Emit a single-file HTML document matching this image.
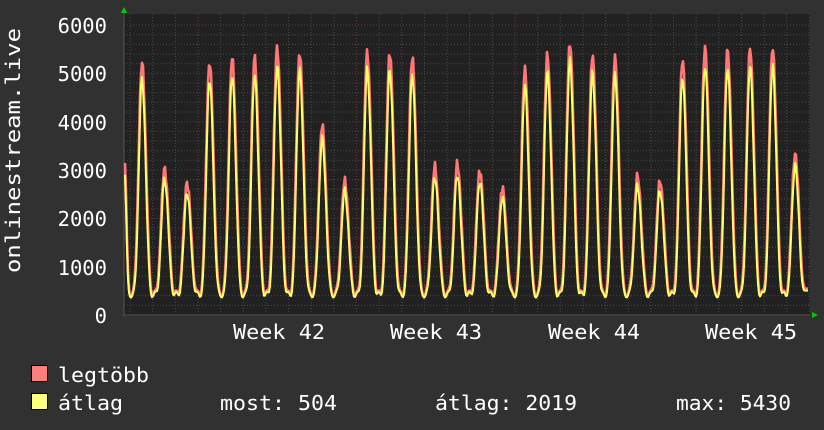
<!DOCTYPE html>
<html><head><meta charset="utf-8"><style>
html,body{margin:0;padding:0;background:#313131;}
svg{display:block}
text{font-family:"DejaVu Sans Mono","Liberation Mono",monospace;fill:#fff;font-size:20.5px}
</style></head><body>
<svg id="s" width="824" height="430" xmlns="http://www.w3.org/2000/svg">
<rect x="0" y="0" width="824" height="430" fill="#313131"/>
<rect x="124" y="14" width="686" height="302" fill="#212121"/>
<g id="grid"></g>
<path id="red" fill="none" stroke="#ff7777" stroke-width="2.6" stroke-linejoin="round"/>
<path id="yel" fill="none" stroke="#ffff66" stroke-width="2" stroke-linejoin="round"/>
<polygon points="121,13 127,13 124,7" fill="#00cc00"/>
<polygon points="812,312 812,318 818,315" fill="#00cc00"/>
<g text-anchor="end">
<text x="107" y="33">6000</text>
<text x="107" y="81">5000</text>
<text x="107" y="130">4000</text>
<text x="107" y="178">3000</text>
<text x="107" y="226">2000</text>
<text x="107" y="275">1000</text>
<text x="107" y="323">0</text>
</g>
<text transform="translate(20,273) rotate(-90)" textLength="245" lengthAdjust="spacingAndGlyphs">onlinestream.live</text>
<text x="233" y="339" textLength="92" lengthAdjust="spacingAndGlyphs">Week 42</text>
<text x="390" y="339" textLength="92" lengthAdjust="spacingAndGlyphs">Week 43</text>
<text x="548" y="339" textLength="92" lengthAdjust="spacingAndGlyphs">Week 44</text>
<text x="705" y="339" textLength="92" lengthAdjust="spacingAndGlyphs">Week 45</text>
<rect x="31.5" y="365.5" width="16" height="16" fill="#ff7f7f" stroke="#000"/>
<rect x="31.5" y="393.5" width="16" height="16" fill="#ffff7f" stroke="#000"/>
<text x="58" y="382" textLength="91" lengthAdjust="spacingAndGlyphs">legtöbb</text>
<text x="58" y="410" textLength="65" lengthAdjust="spacingAndGlyphs">átlag</text>
<text x="220" y="410" textLength="117" lengthAdjust="spacingAndGlyphs">most: 504</text>
<text x="435" y="410" textLength="142" lengthAdjust="spacingAndGlyphs">átlag: 2019</text>
<text x="676" y="410" textLength="115" lengthAdjust="spacingAndGlyphs">max: 5430</text>
</svg>
<script>
(function(){
var g=document.getElementById('grid'),h='';
var L=124,R=810,B=315,k=290/6000;
for(var v=200;v<=6000;v+=200){var y=(B-v*k).toFixed(1);var maj=v%1000==0;
h+='<line x1="'+L+'" x2="'+R+'" y1="'+y+'" y2="'+y+'" stroke="'+(maj?'#6a3a3a':'#4a4a4a')+'" stroke-dasharray="1,2"/>';}
var wk=158.5;
for(var i=-6;i<32;i++){var x=198+i*wk/7;if(x<=L||x>=R)continue;var maj=(i%7==0);
h+='<line x1="'+x.toFixed(1)+'" x2="'+x.toFixed(1)+'" y1="14" y2="'+(B+2)+'" stroke="'+(maj?'#6a3a3a':'#4a4a4a')+'" stroke-dasharray="1,2"/>';}
h+='<line x1="'+L+'" x2="'+R+'" y1="'+B+'" y2="'+B+'" stroke="#555"/>';
h+='<line x1="'+L+'" x2="'+L+'" y1="12" y2="'+(B+2)+'" stroke="#555"/>';
g.innerHTML=h;
var peaks=[5200,3000,2700,5200,5300,5300,5500,5400,3900,2750,5400,5400,5300,3050,3100,2950,2600,5050,5350,5600,5350,5300,2850,2750,5250,5500,5450,5500,5500,3300];
var p0=142,P=22.52,mn=420;
function val(x,avg){var n=Math.round((x-p0)/P);if(n<-1)n=-1;if(n>29)n=29;
var d=x-(p0+n*P);var pk=n<0?3500:peaks[n];
if(n<0){d=(x-124)*1.8;}
var t=(1+Math.cos(2*Math.PI*d/P))/2;
var f=Math.pow(t,d<0?2.2:1.6);
var base=mn+60*Math.sin(x*0.9);
if(avg){return base+((pk*0.94)-base)*Math.pow(f,1.15)+80*Math.sin(x*1.7)*f;}
return base+30+(pk-base)*f+90*Math.sin(x*2.3)*f;}
function path(avg){var s='';for(var x=125;x<=808;x+=1){var v=val(x,avg);if(x>=805)v=504+(avg?0:40);var y=B-v*k;s+=(x==125?'M':'L')+x+','+y.toFixed(1);}return s;}
document.getElementById('red').setAttribute('d',path(false));
document.getElementById('yel').setAttribute('d',path(true));
})();
</script>
</body></html>
